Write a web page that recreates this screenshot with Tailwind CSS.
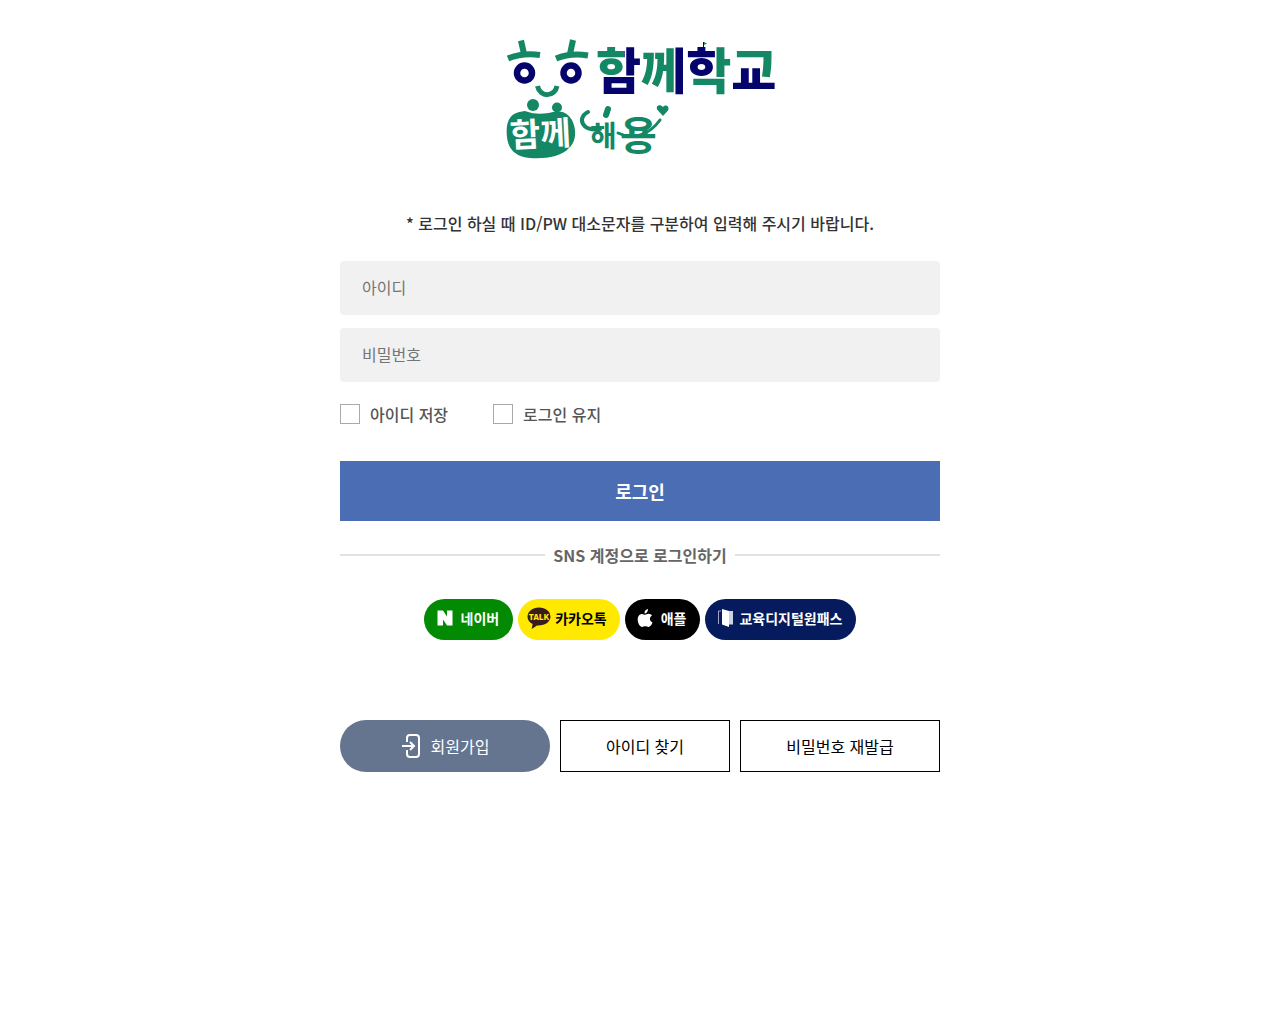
<!DOCTYPE html>
<html lang="ko">
<head>
    <meta charset="UTF-8">
    <meta name="viewport" content="width=device-width, initial-scale=1.0">
    <title>로그인 - 함께학교</title>
    <script src="https://cdn.jsdelivr.net/npm/@tailwindcss/browser@4"></script>
</head>
<body class="bg-white font-['Noto_Sans_CJK_KR',sans-serif] text-base text-black">
    <main class="mx-auto max-w-[600px] pt-10 pb-16">
        <!-- 로고 -->
        <h1 class="flex justify-center">
            <a href="#" aria-label="함께학교 함께해용">
                <svg class="block" width="266" height="120" viewBox="507 40 266 120" fill="none" overflow="visible">
                    <defs>
                        <pattern id="wordmark" patternUnits="userSpaceOnUse" x="590" y="30" width="200" height="80">
                            <rect width="200" height="80" fill="#148764"/>
                            <path d="M34 0h16v80H8V46h26zM85 0h10v80H85zM97 0h28v46H97zM141 37h29v12h20v31h-49z" fill="#04046c"/>
                        </pattern>
                    </defs>
                    <!-- 얼굴 -->
                    <g stroke="#148764" stroke-width="6">
                        <path d="M508 58.500Q523 52.500 540 55"/>
                        <path d="M521 40.500L524 54"/>
                        <path d="M556 58.500Q571 52.500 588 55.500"/>
                        <path d="M573 40L570 54"/>
                        <path d="M537.500 86C540 98 555 97 557 86" stroke-width="5"/>
                    </g>
                    <g stroke="#04046c" stroke-width="6.500">
                        <circle cx="524.500" cy="73" r="7.500"/>
                        <circle cx="571" cy="73" r="7.500"/>
                    </g>
                    <text x="596" y="89" font-size="49" font-weight="900" fill="url(#wordmark)">함께학교</text>
                    <path d="M703.500 50v-8" stroke="#04046c"/>
                    <path d="M704 42l3 1.500-3 1.500z" fill="#148764"/>
                    <!-- 함께 -->
                    <g fill="#148764">
                        <circle cx="533" cy="105" r="6"/>
                        <circle cx="557" cy="107.500" r="5"/>
                        <path d="M510 118C514 112 520 112 525 111C536 115 545 114 553 112C562 110 568 113 572 120C577 130 576 142 569 148C561 157 545 159 530 158C516 157 508 149 507 137C506 129 507 122 510 118z"/>
                    </g>
                    <text x="510" y="146" font-size="33" font-weight="700" fill="#fff" transform="rotate(-3 540 135)">함께</text>
                    <!-- 해용 -->
                    <g stroke="#148764" stroke-linecap="round">
                        <path d="M588 112C577 117 581 132 600 129" stroke-width="4"/>
                        <path d="M608 109L606 115" stroke-width="6"/>
                        <path d="M618 133C634 141 650 134 660 120" stroke-width="3"/>
                    </g>
                    <text x="590" y="147" font-size="29" font-weight="700" fill="#148764">해</text>
                    <text x="620" y="150" font-size="40" font-weight="700" fill="#148764">용</text>
                    <path d="M663 116L657.500 110C655 106 660 103.500 663 107C666 103.500 670 107 668 110.500z" fill="#148764"/>
                </svg>
            </a>
        </h1>

        <form onsubmit="return false">
            <p class="mt-[51px] text-center font-medium leading-6 text-[#333]">* 로그인 하실 때 ID/PW 대소문자를 구분하여 입력해 주시기 바랍니다.</p>

            <div class="mt-[26px] flex flex-col gap-[13px]">
                <input type="text" id="userId" aria-label="아이디" placeholder="아이디" class="h-[54px] w-full rounded bg-[#f1f1f1] px-[22px] pb-[2px] placeholder:text-[#757575]">
                <input type="password" id="userPw" aria-label="비밀번호" placeholder="비밀번호" class="h-[54px] w-full rounded bg-[#f1f1f1] px-[22px] pb-[2px] placeholder:text-[#757575]">
            </div>

            <div class="mt-5 flex gap-[45px] font-medium leading-6 text-[#555]">
                <label class="flex items-center gap-[10px]">
                    <input type="checkbox" class="size-5 appearance-none border border-[#aaa] bg-white checked:bg-[#4b6db3]">
                    아이디 저장
                </label>
                <label class="flex items-center gap-[10px]">
                    <input type="checkbox" class="size-5 appearance-none border border-[#aaa] bg-white checked:bg-[#4b6db3]">
                    로그인 유지
                </label>
            </div>

            <button type="submit" class="mt-[35px] h-[60px] w-full bg-[#4b6db3] text-lg font-bold text-white">로그인</button>
        </form>

        <!-- SNS 로그인 -->
        <section>
            <div class="mt-[22px] flex items-center gap-2">
                <span class="h-[2px] flex-1 bg-[#e1e1e1]"></span>
                <h2 class="font-bold leading-6 text-[#666]">SNS 계정으로 로그인하기</h2>
                <span class="h-[2px] flex-1 bg-[#e1e1e1]"></span>
            </div>
            <div class="mt-8 flex flex-wrap justify-center gap-[5px] text-sm font-bold text-white">
                <button type="button" class="flex h-[41px] items-center gap-2 rounded-full bg-[#028a02] pr-[14px] pb-[3px] pl-[13px]">
                    <svg width="16" height="16" viewBox="0 0 16 16" fill="#fff"><path d="M.5.5h5.500l4 6v-6h5.500v15H10L6 9.500v6H.5z"/></svg>
                    네이버
                </button>
                <button type="button" class="flex h-[41px] items-center gap-1 rounded-full bg-[#ffe900] pr-[13px] pb-[3px] pl-[9px] text-black">
                    <svg width="24" height="24" viewBox="0 0 24 24">
                        <path d="M12 1.500C5.500 1.500.5 5.500.5 10.800C.5 14 2.500 16.600 5.600 18.100L4.700 23L10 19.500C18 20 23.500 15.800 23.500 10.800C23.500 5.500 18.500 1.500 12 1.500z" fill="#3b1c1c"/>
                        <text x="12" y="14" text-anchor="middle" font-size="8" font-weight="900" fill="#ffe900">TALK</text>
                    </svg>
                    카카오톡
                </button>
                <button type="button" class="flex h-[41px] items-center gap-2 rounded-full bg-black pr-[14px] pb-[3px] pl-3">
                    <svg width="16" height="20" viewBox="0 0 16 20" fill="#fff">
                        <path d="M11 1C11 3.500 9.500 5.500 7.500 5.500C7.200 3.200 9 1.200 11 1zM8 6.700C9 6.700 10 5.800 11.700 5.800C13 5.800 14.200 6.500 15 7.600C12 9.300 12.400 13.300 15.500 14.500C14.700 16.700 13.200 19 11.500 19C10.200 19 9.700 18.300 8.300 18.300C6.800 18.300 6.300 19 5.100 19C3 19 .7 15.200.7 11.500C.7 8 2.800 5.900 5 5.900C6.300 5.900 7.300 6.700 8 6.700z"/>
                    </svg>
                    애플
                </button>
                <button type="button" class="flex h-[41px] items-center gap-[6px] rounded-full bg-[#061b5e] pr-[14px] pb-[3px] pl-3">
                    <svg width="16" height="18" viewBox="0 0 16 18">
                        <path d="M4 2H1.500V15" fill="none" stroke="#9da8c9"/>
                        <path d="M5 0L12 2V18L5 15.500z" fill="#fff"/>
                        <path d="M12 2h4v13.500h-4z" fill="#cbd2e5"/>
                    </svg>
                    교육디지털원패스
                </button>
            </div>
        </section>

        <!-- 회원 메뉴 -->
        <nav class="mt-20 grid grid-cols-[21fr_17fr_20fr] gap-[10px]">
            <a href="#" class="flex h-[52px] items-center justify-center gap-2 rounded-full bg-[#65748f] text-white">
                <svg width="22" height="26" viewBox="0 0 22 26" fill="none" stroke="#fff" stroke-width="2">
                    <path d="M6 9V5Q6 2 9 2H15Q18 2 18 5V21Q18 24 15 24H9Q6 24 6 21V17"/>
                    <path d="M1 13H13M9 9L13 13L9 17"/>
                </svg>
                회원가입
            </a>
            <a href="#" class="flex h-[52px] items-center justify-center border border-black">아이디 찾기</a>
            <a href="#" class="flex h-[52px] items-center justify-center border border-black">비밀번호 재발급</a>
        </nav>
    </main>
</body>
</html>
